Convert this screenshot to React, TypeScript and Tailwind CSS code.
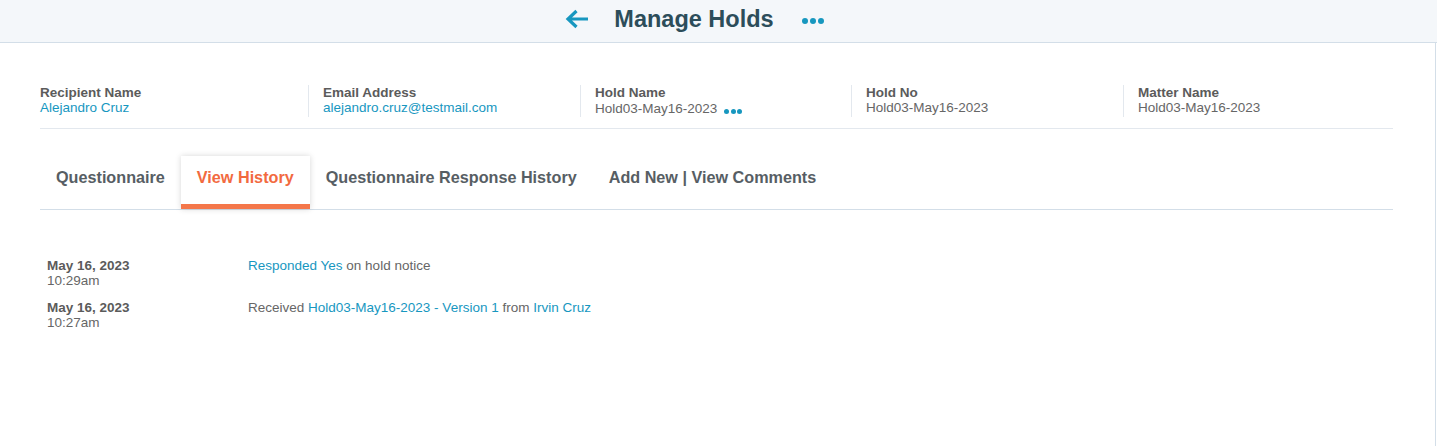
import React from 'react';

const font = { fontFamily: '"Liberation Sans", Arial, sans-serif' };

const infoCols = [
  { label: 'Recipient Name', value: 'Alejandro Cruz', link: true },
  { label: 'Email Address', value: 'alejandro.cruz@testmail.com', link: true },
  { label: 'Hold Name', value: 'Hold03-May16-2023', dots: true },
  { label: 'Hold No', value: 'Hold03-May16-2023' },
  { label: 'Matter Name', value: 'Hold03-May16-2023' },
];

const tabs = ['Questionnaire', 'View History', 'Questionnaire Response History', 'Add New | View Comments'];

const Dots: React.FC<{ size: number; gap: number }> = ({ size, gap }) => (
  <span className="inline-flex items-center" style={{ gap }}>
    {[0, 1, 2].map((i) => (
      <span key={i} className="rounded-full bg-[#1797bf]" style={{ width: size, height: size }} />
    ))}
  </span>
);

export default function App() {
  return (
    <div className="w-[1437px] h-[446px] bg-white overflow-hidden" style={font}>
      <header className="h-[43px] bg-[#f4f7fa] border-b border-[#d3dee8] flex items-center justify-center pr-[48px]">
        <svg width="24" height="22" viewBox="0 0 24 22" className="mr-[25px] mt-[-4px]">
          <path d="M23 11H3.5M11.5 3L3 11L11.5 19" fill="none" stroke="#1797bf" strokeWidth="3.2" />
        </svg>
        <h1 className="text-[23.5px] font-bold text-[#2c4d5a] leading-none mt-[-3px]">Manage Holds</h1>
        <span className="ml-[28px] mt-[-4px]">
          <Dots size={6} gap={2} />
        </span>
      </header>

      <div className="w-[1436px] h-[403px] border-r border-[#d3dee8] pl-[40px] pr-[42px] pt-[42px]">
        <div className="grid grid-cols-[268px_272px_271px_272px_1fr] border-b border-[#e3e8ee] pb-[11px]">
          {infoCols.map((c, i) => (
            <div
              key={c.label}
              className={`text-[13.5px] leading-[15px] ${i > 0 ? 'border-l border-[#e3e8ee] pl-[14px]' : ''}`}
            >
              <div className="font-bold text-[#5b5b5b]">{c.label}</div>
              <div className={`flex items-center ${c.link ? 'text-[#1797bf]' : 'text-[#666]'}`}>
                {c.value}
                {c.dots && (
                  <span className="ml-[7px] mt-[2px]">
                    <Dots size={5} gap={1.5} />
                  </span>
                )}
              </div>
            </div>
          ))}
        </div>

        <div className="flex mt-[27px] border-b border-[#d3dee8]">
          {tabs.map((t) => {
            const active = t === 'View History';
            return (
              <div
                key={t}
                className={`h-[53px] px-[16px] text-[16.2px] font-bold flex flex-col ${
                  active ? 'text-[#f26a3f] shadow-[0_0_6px_rgba(0,0,0,0.16)]' : 'text-[#575e64]'
                }`}
              >
                <div className="flex-1 flex items-center pb-[6px]">{t}</div>
                <div className={`h-[5px] -mx-[16px] ${active ? 'bg-[#f4774a]' : ''}`} />
              </div>
            );
          })}
        </div>

        <div className="mt-[48px] text-[13.5px] leading-[15px] pl-[7px]">
          <div className="flex h-[42px]">
            <div className="w-[201px]">
              <div className="font-bold text-[#5b5b5b]">May 16, 2023</div>
              <div className="text-[#666]">10:29am</div>
            </div>
            <div className="text-[#666]">
              <span className="text-[#1797bf]">Responded Yes</span> on hold notice
            </div>
          </div>
          <div className="flex h-[42px]">
            <div className="w-[201px]">
              <div className="font-bold text-[#5b5b5b]">May 16, 2023</div>
              <div className="text-[#666]">10:27am</div>
            </div>
            <div className="text-[#666]">
              Received <span className="text-[#1797bf]">Hold03-May16-2023 - Version 1</span> from{' '}
              <span className="text-[#1797bf]">Irvin Cruz</span>
            </div>
          </div>
        </div>
      </div>
    </div>
  );
}
